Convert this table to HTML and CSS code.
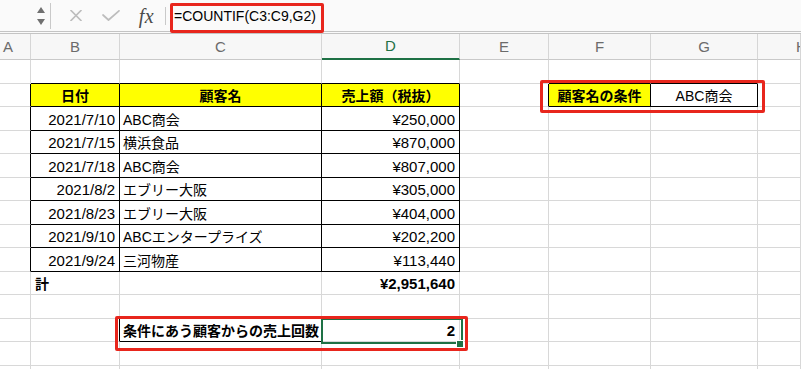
FILE: index.html
```html
<!DOCTYPE html>
<html lang="ja">
<head>
<meta charset="utf-8">
<title>COUNTIF</title>
<link rel="stylesheet" href="styles.css">
</head>
<body>
<div class="app">
  <div class="fbar">
    <div class="fb-name">
      <svg class="stepper" width="8" height="18" viewBox="0 0 8 18"><path d="M4 0 L8 6 H0 Z"/><path d="M0 12 H8 L4 18 Z"/></svg>
    </div>
    <div class="fb-sep tall"></div>
    <div class="fb-btn w-x"><svg width="12" height="11" viewBox="0 0 12 11"><path d="M1 0.5 L11 10.5 M11 0.5 L1 10.5"/></svg></div>
    <div class="fb-btn w-ok"><svg width="18" height="11" viewBox="0 0 18 11"><path d="M1 5 L6.5 10 L17 0.8"/></svg></div>
    <div class="fb-btn w-fx"><span class="fx">fx</span></div>
    <div class="fb-sep short"></div>
    <div class="fb-input">=COUNTIF(C3:C9,G2)</div>
  </div>

  <div class="sheet">
    <div class="c hd ha">A</div><div class="c hd">B</div><div class="c hd">C</div><div class="c hd sel">D</div><div class="c hd">E</div><div class="c hd">F</div><div class="c hd">G</div><div class="c hd hh">H</div>

    <div class="c"></div><div class="c bb"></div><div class="c bb"></div><div class="c bb"></div><div class="c"></div><div class="c bb"></div><div class="c bb"></div><div class="c"></div>

    <div class="c br"></div><div class="c y b m br bb">日付</div><div class="c y b m br bb">顧客名</div><div class="c y b m br bb">売上額（税抜）</div><div class="c br"></div><div class="c y b m br bb">顧客名の条件</div><div class="c m br bb">ABC商会</div><div class="c"></div>

    <div class="c br"></div><div class="c r n br bb">2021/7/10</div><div class="c br bb">ABC商会</div><div class="c r n br bb">¥250,000</div><div class="c"></div><div class="c"></div><div class="c"></div><div class="c"></div>

    <div class="c br"></div><div class="c r n br bb">2021/7/15</div><div class="c br bb">横浜食品</div><div class="c r n br bb">¥870,000</div><div class="c"></div><div class="c"></div><div class="c"></div><div class="c"></div>

    <div class="c br"></div><div class="c r n br bb">2021/7/18</div><div class="c br bb">ABC商会</div><div class="c r n br bb">¥807,000</div><div class="c"></div><div class="c"></div><div class="c"></div><div class="c"></div>

    <div class="c br"></div><div class="c r n br bb">2021/8/2</div><div class="c br bb">エブリー大阪</div><div class="c r n br bb">¥305,000</div><div class="c"></div><div class="c"></div><div class="c"></div><div class="c"></div>

    <div class="c br"></div><div class="c r n br bb">2021/8/23</div><div class="c br bb">エブリー大阪</div><div class="c r n br bb">¥404,000</div><div class="c"></div><div class="c"></div><div class="c"></div><div class="c"></div>

    <div class="c br"></div><div class="c r n br bb">2021/9/10</div><div class="c br bb">ABCエンタープライズ</div><div class="c r n br bb">¥202,200</div><div class="c"></div><div class="c"></div><div class="c"></div><div class="c"></div>

    <div class="c br"></div><div class="c r n br bb">2021/9/24</div><div class="c br bb">三河物産</div><div class="c r n br bb">¥113,440</div><div class="c"></div><div class="c"></div><div class="c"></div><div class="c"></div>

    <div class="c"></div><div class="c b total-label">計</div><div class="c"></div><div class="c r n b">¥2,951,640</div><div class="c"></div><div class="c"></div><div class="c"></div><div class="c"></div>

    <div class="c"></div><div class="c"></div><div class="c bb"></div><div class="c"></div><div class="c"></div><div class="c"></div><div class="c"></div><div class="c"></div>

    <div class="c"></div><div class="c br"></div><div class="c b br bb tight">条件にあう顧客からの売上回数</div><div class="c r n b">2</div><div class="c"></div><div class="c"></div><div class="c"></div><div class="c"></div>

    <div class="c"></div><div class="c"></div><div class="c"></div><div class="c"></div><div class="c"></div><div class="c"></div><div class="c"></div><div class="c"></div>

    <div class="c"></div><div class="c"></div><div class="c"></div><div class="c"></div><div class="c"></div><div class="c"></div><div class="c"></div><div class="c"></div>
  </div>

  <div class="selection"><div class="handle"></div></div>
  <div class="callout co-formula"></div>
  <div class="callout co-cond"></div>
  <div class="callout co-result"></div>
</div>
</body>
</html>
```

FILE: styles.css
```css
html, body {
  margin: 0;
  padding: 0;
  background: #ffffff;
}

body {
  width: 801px;
  height: 369px;
  overflow: hidden;
  font-family: "Liberation Sans", "Noto Sans CJK JP", sans-serif;
  color: #000;
}

.app {
  position: relative;
  width: 801px;
  height: 369px;
  overflow: hidden;
}

/* ---------- formula bar ---------- */
.fbar {
  display: flex;
  align-items: center;
  height: 31px;
  background: #fafafa;
  border-bottom: 3px double #c4c4c4;
}

.fb-name {
  width: 50px;
  height: 31px;
  box-sizing: border-box;
  display: flex;
  align-items: center;
  justify-content: flex-end;
  padding-right: 5px;
}

.stepper path {
  fill: #707070;
}

.fb-sep {
  width: 1px;
  background: #c9c9c9;
}
.fb-sep.tall { height: 26px; }
.fb-sep.short { height: 18px; }

.fb-btn {
  height: 31px;
  box-sizing: border-box;
  display: flex;
  align-items: center;
  justify-content: center;
}
.w-x { width: 50px; }
.w-ok { width: 19px; }
.w-fx { width: 45px; padding-left: 8px; }

.fb-btn svg path {
  fill: none;
  stroke: #bdbdbd;
  stroke-width: 1.7;
  stroke-linecap: round;
  stroke-linejoin: round;
}

.fx {
  font-family: "Liberation Serif", serif;
  font-style: italic;
  font-size: 20px;
  color: #4a4a4a;
  line-height: 1;
  letter-spacing: 0.5px;
}

.fb-input {
  padding-left: 8px;
  font-size: 14px;
  color: #000;
}

/* ---------- sheet grid ---------- */
.sheet {
  display: grid;
  grid-template-columns: 31px 89px 202px 138px 89px 102px 107px 43px;
  grid-template-rows: 26px repeat(13, 23.5px) 20px;
}

.c {
  box-sizing: border-box;
  min-width: 0;
  overflow: hidden;
  white-space: nowrap;
  display: flex;
  align-items: flex-end;
  padding: 0 3px 1px 3px;
  font-size: 14px;
  line-height: 18px;
  border-right: 1px solid #d8d8d8;
  border-bottom: 1px solid #d8d8d8;
}

.hd {
  align-items: center;
  justify-content: center;
  padding: 0;
  background: #f7f7f7;
  color: #6b6b6b;
  font-size: 15px;
  border-right-color: #d6d6d6;
  border-bottom-color: #c9c9c9;
}
.hd.ha { justify-content: flex-start; padding-left: 3px; }
.hd.hh { justify-content: flex-start; padding-left: 38px; }
.hd.sel {
  color: #1e7145;
  border-bottom: 2px solid #1e7145;
}

.bb { border-bottom-color: #000; }
.br { border-right-color: #000; }
.y { background: #ffff00; }
.b { font-weight: 700; }
.m { justify-content: center; }
.r { justify-content: flex-end; padding-right: 4px; }
.n { font-size: 15px; }
.total-label { padding-left: 4px; }
.tight { padding-right: 0; }

/* ---------- overlays ---------- */
.selection {
  position: absolute;
  left: 321px;
  top: 318px;
  width: 142px;
  height: 26px;
  box-sizing: border-box;
  border: 2px solid #1e7145;
}
.handle {
  position: absolute;
  right: -3px;
  bottom: -6px;
  width: 6px;
  height: 6px;
  background: #1e7145;
  border: 1px solid #fff;
}

.callout {
  position: absolute;
  box-sizing: border-box;
  border: 3px solid #e8261d;
  border-radius: 2px;
}
.co-formula { left: 170px; top: 3px; width: 154px; height: 30px; }
.co-cond { left: 540px; top: 80px; width: 225px; height: 33px; }
.co-result { left: 115px; top: 316px; width: 353px; height: 35px; }
```
